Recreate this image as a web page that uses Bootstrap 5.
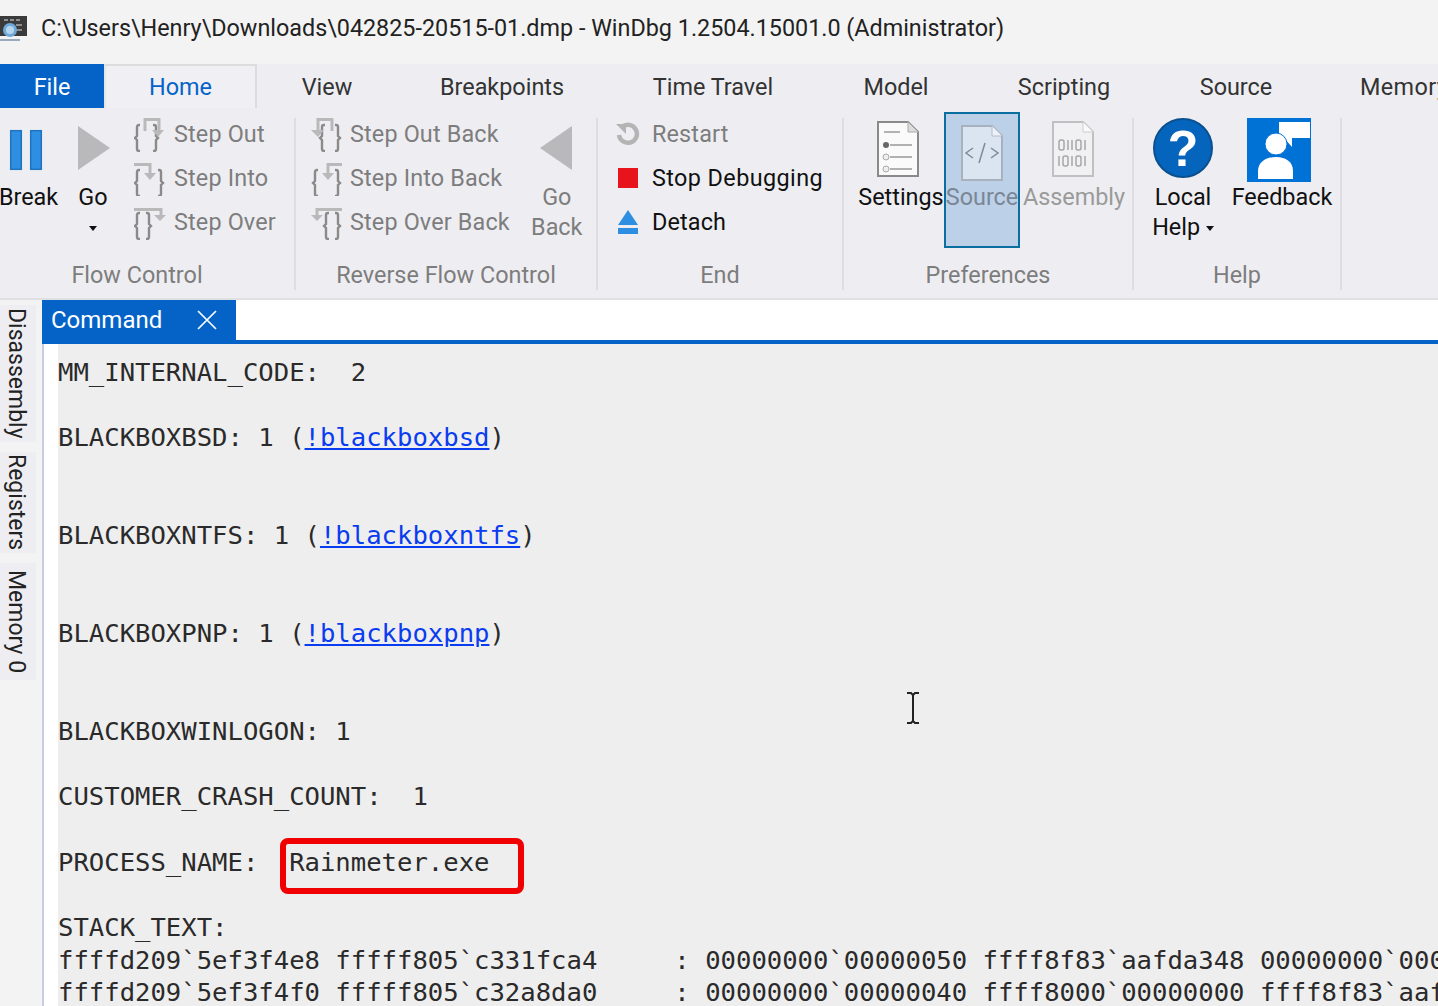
<!doctype html>
<html lang="en">
<head>
<meta charset="utf-8">
<title>WinDbg</title>
<link href="https://cdn.jsdelivr.net/npm/bootstrap@5.3.0/dist/css/bootstrap.min.css" rel="stylesheet">
<style>
html,body{height:100%;overflow:hidden}
body{background:#f3f3f3;font-family:"Open Sans","Noto Sans",sans-serif;color:#111;width:1438px;height:1006px;position:relative}
.ui-txt{font-family:Roboto,"Open Sans",sans-serif;font-size:23.4px}
.wtitle{height:64px;background:#f3f3f3;padding-left:41px;padding-bottom:7px;font-size:23.35px;font-family:Roboto,sans-serif;color:#222;position:relative;white-space:nowrap}
.wtitle svg{position:absolute;left:0;top:15px}
.tabrow{display:grid;grid-template-columns:104px 153px 140px 210px 212px 154px 182px 162px 1fr;height:44px;background:#eeeef2;overflow:hidden;white-space:nowrap}
.rtab{display:flex;align-items:center;justify-content:center;color:#333;padding-top:3px}
.rtab-file{background:#0563c8;color:#fff}
.rtab-home{color:#0563c8;border-top:2px solid #dcdcdc;border-left:2px solid #e5e5e8;border-right:2px solid #dcdcdc;background:#f0f0f4;padding-top:1px}
.rtab-last{justify-content:flex-start;padding-left:43px;letter-spacing:.4px}
.ribbon{display:flex;height:192px;background:#eeeef2;border-bottom:2px solid #e0e0e3}
.rgroup{display:flex;flex-direction:column;border-right:2px solid #dedee2;margin-top:10px;margin-bottom:8px;flex:none}
.rg1{width:296px}.rg2{width:302px}.rg3{width:246px}.rg4{width:290px}.rg5{width:208px}
.rbody{flex:1;display:flex;min-height:0;position:relative}
.rlabel{text-align:center;color:#7d7d7d;height:30px;line-height:30px;flex:none}
.rlabel-flow{padding-right:20px}
.bigbtn{display:flex;flex-direction:column;align-items:center;line-height:32px;flex:none;text-align:center;white-space:nowrap;color:#111}
.bigbtn svg{flex:none;display:block;margin-bottom:4px}
.bigbtn .lbl{line-height:30px}
.off{color:#7d7d7d}
.stack3{display:flex;flex-direction:column;flex:none;margin-top:-6px}
.smbtn{height:44px;display:flex;align-items:center;white-space:nowrap;color:#7d7d7d;line-height:44px;letter-spacing:.15px}
.smbtn svg{flex:none}
.smbtn.on{color:#111}
.wider{letter-spacing:.4px}
.gap12{margin-right:12px}
.caret-dn{display:inline-block;width:0;height:0;border-left:4px solid transparent;border-right:4px solid transparent;border-top:5px solid #111;vertical-align:middle}
.b-break{width:57px}.b-go{width:72px}
.b-goback{width:62px;margin-left:16px}
.b-goback svg{margin-right:2px}
.stk-a{margin-left:5px}
.stk-b{margin-left:14px}
.b-set{width:86px;margin-left:14px}
.b-set svg,.b-fb svg{margin-right:6px}
.b-fb svg{margin-bottom:0}
.b-src{width:76px;background:#bcd0e8;border:2px solid #0a6ea0;height:136px;margin-top:-6px;padding-top:8px;color:#7a8694}
.b-src svg{margin-bottom:0}
.b-asm{width:108px;color:#9a9a9a}
.b-asm svg{margin-right:2px}
.stk-c{margin-left:18px}
.b-help{width:98px}
.b-fb{width:100px}
.mainarea{display:flex;height:706px}
.siderail{width:42px;flex:none;background:#f3f3f3;padding-top:5px;display:flex;flex-direction:column;gap:10px}
.vtab{writing-mode:vertical-rl;font-family:Roboto,sans-serif;font-size:23px;width:36px;background:#eeeef2;color:#222;line-height:32px;padding-right:4px;text-align:center;white-space:nowrap}
.vt1{height:137px}.vt2{height:101px}.vt3{height:117px}
.cmdpane{flex:1;min-width:0;display:flex;flex-direction:column;background:#fff;border-left:2px solid #c9cbe0}
.tabstrip{height:44px;flex:none;background:#fff;border-bottom:4px solid #0563c8;margin-left:-2px;display:flex}
.cmdtab{width:194px;height:40px;background:#0563c8;color:#fff;display:flex;align-items:center;padding-left:9px;font-family:Roboto,sans-serif;font-size:24px;flex:none;justify-content:space-between;padding-right:18px}
.outwrap{flex:1;padding-left:14px;background:#fff;min-height:0;position:relative;overflow:hidden}
.outtxt{margin:0;height:100%;background:#eeeeee;padding-top:11.7px;font-family:"DejaVu Sans Mono",monospace;font-size:25.6px;line-height:32.67px;color:#2a2a2a;overflow:hidden;white-space:pre}
.outtxt a{color:#0a3cf0;text-decoration:underline}
.redbox{position:absolute;left:236px;top:494px;width:244px;height:56px;border:6px solid #f00000;border-radius:8px}
.ibeam{position:absolute;left:861px;top:348px}
</style>
</head>
<body>
<div class="wtitle d-flex align-items-center">
  <svg width="28" height="28" viewBox="0 0 28 28"><rect x="0" y="1" width="27" height="20" fill="#3a3a3a"/><g fill="#8f8f8f"><rect x="4" y="4" width="4" height="2"/><rect x="10" y="4" width="4" height="2"/><rect x="16" y="4" width="4" height="2"/><rect x="16" y="9" width="6" height="2"/><rect x="16" y="14" width="6" height="2"/></g><circle cx="10" cy="15" r="7" fill="#6fa9d8"/><circle cx="10" cy="15" r="4" fill="#b7d6ee"/><path d="M0 25h20" stroke="#9ab" stroke-width="2"/></svg>
  <span>C:\Users\Henry\Downloads\042825-20515-01.dmp - WinDbg 1.2504.15001.0 (Administrator)</span>
</div>
<div class="tabrow ui-txt">
  <div class="rtab rtab-file">File</div>
  <div class="rtab rtab-home">Home</div>
  <div class="rtab">View</div>
  <div class="rtab">Breakpoints</div>
  <div class="rtab">Time Travel</div>
  <div class="rtab">Model</div>
  <div class="rtab">Scripting</div>
  <div class="rtab">Source</div>
  <div class="rtab rtab-last">Memory</div>
</div>
<div class="ribbon ui-txt">
  <section class="rgroup rg1">
    <div class="rbody">
      <div class="bigbtn b-break"><svg width="40" height="60" viewBox="0 0 40 60"><g fill="#2e8ee2" stroke="#1f74c2" stroke-width="1.5"><rect x="1.700" y="12.700" width="10.600" height="38.600"/><rect x="21.700" y="12.700" width="10.600" height="38.600"/></g></svg><span class="lbl">Break</span></div>
      <div class="bigbtn b-go"><svg width="40" height="60" viewBox="0 0 40 60"><path d="M5 8 37 30 5 52Z" fill="#b9b9bb"/></svg><span class="lbl">Go</span><span class="lbl"><i class="caret-dn"></i></span></div>
      <div class="stack3 stk-a">
        <div class="smbtn"><svg class="me-2" width="32" height="36" viewBox="0 0 32 36"><g fill="none" stroke="#8a8a8a" stroke-width="2.400"><path d="M6 9H5Q3 9 3 11V20L1 22 3 24V33Q3 35 5 35H6"/><path d="M19 9h1q2 0 2 2v9l2 2-2 2v9q0 2-2 2h-1"/></g><path d="M11 15V3.500H25V15" fill="none" stroke="#b9b9b9" stroke-width="3"/><path d="M18 14h12l-6 7z" fill="#b9b9b9"/></svg><span>Step Out</span></div>
        <div class="smbtn"><svg class="me-2" width="32" height="36" viewBox="0 0 32 36"><g fill="none" stroke="#8a8a8a" stroke-width="2.400"><path d="M6 10H5Q3 10 3 12V21L1 23 3 25V34Q3 36 5 36H6"/><path d="M24 10h1q2 0 2 2v9l2 2-2 2v9q0 2-2 2h-1"/></g><path d="M0 4.500H16V13" fill="none" stroke="#b9b9b9" stroke-width="3"/><path d="M10 13h12l-6 7z" fill="#b9b9b9"/></svg><span>Step Into</span></div>
        <div class="smbtn"><svg class="me-2" width="32" height="36" viewBox="0 0 32 36"><g fill="none" stroke="#8a8a8a" stroke-width="2.400"><path d="M6 9H5Q3 9 3 11V20L1 22 3 24V33Q3 35 5 35H6"/><path d="M12 9h1q2 0 2 2v9l2 2-2 2v9q0 2-2 2h-1"/></g><path d="M0 5.500H27V11" fill="none" stroke="#b9b9b9" stroke-width="3"/><path d="M20 11h12l-6 6z" fill="#b9b9b9"/></svg><span>Step Over</span></div>
      </div>
    </div>
    <div class="rlabel rlabel-flow">Flow Control</div>
  </section>
  <section class="rgroup rg2">
    <div class="rbody">
      <div class="stack3 stk-b">
        <div class="smbtn"><svg class="me-1" width="36" height="36" viewBox="0 0 36 36"><g fill="none" stroke="#8a8a8a" stroke-width="2.400"><path d="M15 9H14Q12 9 12 11V20L10 22 12 24V33Q12 35 14 35H15"/><path d="M25 9h1q2 0 2 2v9l2 2-2 2v9q0 2-2 2h-1"/></g><path d="M8 15V3.500H22V15" fill="none" stroke="#b9b9b9" stroke-width="3"/><path d="M1 14h13l-6 7z" fill="#b9b9b9"/></svg><span>Step Out Back</span></div>
        <div class="smbtn"><svg class="me-1" width="36" height="36" viewBox="0 0 36 36"><g fill="none" stroke="#8a8a8a" stroke-width="2.400"><path d="M8 10H7Q5 10 5 12V21L3 23 5 25V34Q5 36 7 36H8"/><path d="M25 10h1q2 0 2 2v9l2 2-2 2v9q0 2-2 2h-1"/></g><path d="M32 4.500H18V13" fill="none" stroke="#b9b9b9" stroke-width="3"/><path d="M12 13h12l-6 7z" fill="#b9b9b9"/></svg><span>Step Into Back</span></div>
        <div class="smbtn"><svg class="me-1" width="36" height="36" viewBox="0 0 36 36"><g fill="none" stroke="#8a8a8a" stroke-width="2.400"><path d="M19 9H18Q16 9 16 11V20L14 22 16 24V33Q16 35 18 35H19"/><path d="M25 9h1q2 0 2 2v9l2 2-2 2v9q0 2-2 2h-1"/></g><path d="M32 5.500H7V11" fill="none" stroke="#b9b9b9" stroke-width="3"/><path d="M1 11h12l-6 6z" fill="#b9b9b9"/></svg><span>Step Over Back</span></div>
      </div>
      <div class="bigbtn b-goback off"><svg width="40" height="60" viewBox="0 0 40 60"><path d="M36 8 4 30 36 52Z" fill="#b9b9bb"/></svg><span class="lbl">Go</span><span class="lbl">Back</span></div>
    </div>
    <div class="rlabel">Reverse Flow Control</div>
  </section>
  <section class="rgroup rg3">
    <div class="rbody">
      <div class="stack3 stk-c">
        <div class="smbtn"><svg class="gap12" width="24" height="24" viewBox="0 0 24 24"><path d="M6 5A9 9 0 1 1 3 13" fill="none" stroke="#b4b4b4" stroke-width="4.500"/><path d="M0 2h10v10z" fill="#b4b4b4"/></svg><span>Restart</span></div>
        <div class="smbtn on"><svg class="gap12" width="24" height="24" viewBox="0 0 24 24"><rect x="2" y="2" width="20" height="20" fill="#e8141c"/></svg><span class="wider">Stop Debugging</span></div>
        <div class="smbtn on"><svg class="gap12" width="24" height="24" viewBox="0 0 24 24"><path d="M2 15 12 0l10 15z" fill="#2e8ee2"/><rect x="2" y="18" width="20" height="6" fill="#2e8ee2"/></svg><span>Detach</span></div>
      </div>
    </div>
    <div class="rlabel">End</div>
  </section>
  <section class="rgroup rg4">
    <div class="rbody">
      <div class="bigbtn b-set"><svg width="44" height="60" viewBox="0 0 44 60"><path d="M2 4h30l10 10v44H2z" fill="#fafafa" stroke="#8a8a8a" stroke-width="2"/><path d="M32 4v10h10" fill="#ddd" stroke="#aaa" stroke-width="1"/><path d="M8 14h16M14 27h22M14 39h22M14 51h22" stroke="#999" stroke-width="1.500"/><circle cx="10" cy="27" r="3" fill="#666"/><circle cx="10" cy="39" r="3" fill="#eee" stroke="#aaa"/><circle cx="10" cy="51" r="3" fill="#eee" stroke="#aaa"/></svg><span class="lbl">Settings</span></div>
      <div class="bigbtn b-src"><svg width="44" height="60" viewBox="0 0 44 60"><path d="M2 4h30l10 10v44H2z" fill="#dbe5f2" stroke="#a8b2bf" stroke-width="2"/><path d="M32 4v10h10" fill="#eef2f8" stroke="#b4bcc8" stroke-width="1"/><path d="M13 26 6 31l7 5M31 26l7 5-7 5M25 21l-6 20" fill="none" stroke="#7f8a98" stroke-width="1.500"/></svg><span class="lbl">Source</span></div>
      <div class="bigbtn b-asm"><svg width="44" height="60" viewBox="0 0 44 60"><path d="M2 4h30l10 10v44H2z" fill="#f1f1f3" stroke="#c0c0c2" stroke-width="2"/><path d="M32 4v10h10" fill="#fafafa" stroke="#ccc" stroke-width="1"/><g fill="none" stroke="#a6a6a8" stroke-width="1.500"><rect x="8" y="22" width="5" height="10" rx="2"/><path d="M17 22v10M21 22v10"/><rect x="25" y="22" width="5" height="10" rx="2"/><path d="M34 22v10M8 38v10"/><rect x="12" y="38" width="5" height="10" rx="2"/><path d="M21 38v10"/><rect x="25" y="38" width="5" height="10" rx="2"/><path d="M34 38v10"/></g></svg><span class="lbl">Assembly</span></div>
    </div>
    <div class="rlabel">Preferences</div>
  </section>
  <section class="rgroup rg5">
    <div class="rbody">
      <div class="bigbtn b-help"><svg width="60" height="60" viewBox="0 0 60 60"><circle cx="30" cy="30" r="29" fill="#0565bd" stroke="#0a4f8e" stroke-width="2"/><text x="30" y="48" text-anchor="middle" font-family="Liberation Sans" font-weight="700" font-size="50" fill="#fff">?</text></svg><span class="lbl">Local</span><span class="lbl">Help <i class="caret-dn"></i></span></div>
      <div class="bigbtn b-fb"><svg width="64" height="64" viewBox="0 0 64 64"><rect width="64" height="64" fill="#0072d6"/><path d="M32 4h31v16H45v9l-8-9h-5z" fill="#fff"/><circle cx="29" cy="26" r="11" stroke="#0072d6" stroke-width="1" fill="#fff"/><path d="M11 61V53c0-9 8-14 18-14s17 5 17 14v8z" fill="#fff"/></svg><span class="lbl">Feedback</span></div>
    </div>
    <div class="rlabel">Help</div>
  </section>
</div>
<div class="mainarea">
  <aside class="siderail">
    <div class="vtab vt1">Disassembly</div>
    <div class="vtab vt2">Registers</div>
    <div class="vtab vt3">Memory 0</div>
  </aside>
  <div class="cmdpane">
    <div class="tabstrip">
      <div class="cmdtab"><span>Command</span><svg width="22" height="22" viewBox="0 0 22 22"><path d="M2 2l18 18M20 2 2 20" stroke="#fff" stroke-width="1.700"/></svg></div>
    </div>
    <div class="outwrap">
<pre class="outtxt">MM_INTERNAL_CODE:  2

BLACKBOXBSD: 1 (<a href="#">!blackboxbsd</a>)


BLACKBOXNTFS: 1 (<a href="#">!blackboxntfs</a>)


BLACKBOXPNP: 1 (<a href="#">!blackboxpnp</a>)


BLACKBOXWINLOGON: 1

CUSTOMER_CRASH_COUNT:  1

PROCESS_NAME:  Rainmeter.exe

STACK_TEXT:
ffffd209`5ef3f4e8 fffff805`c331fca4     : 00000000`00000050 ffff8f83`aafda348 00000000`00000000 ffff8f83`aafda348
ffffd209`5ef3f4f0 fffff805`c32a8da0     : 00000000`00000040 ffff8000`00000000 ffff8f83`aafda348 00000000`00000000</pre>
      <div class="redbox"></div>
      <svg class="ibeam" width="16" height="32" viewBox="0 0 16 32"><path d="M2 1h4l2 2 2-2h4M8 3v26M2 31h4l2-2 2 2h4" fill="none" stroke="#222" stroke-width="2"/></svg>
    </div>
  </div>
</div>
<script src="https://cdn.jsdelivr.net/npm/bootstrap@5.3.0/dist/js/bootstrap.bundle.min.js"></script>
</body>
</html>
